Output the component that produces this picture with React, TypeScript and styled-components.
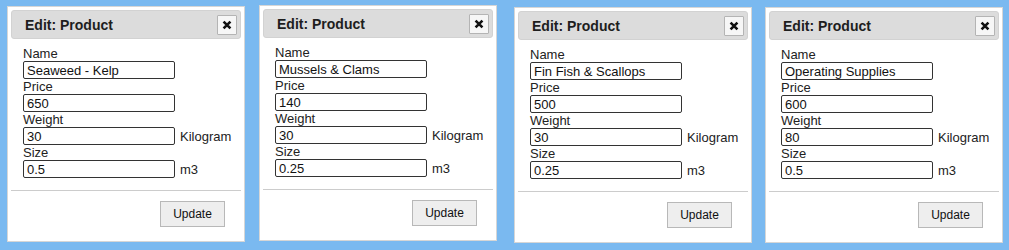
import * as React from "react";
import styled, { createGlobalStyle } from "styled-components";

const GlobalStyle = createGlobalStyle`
  html, body {
    margin: 0;
    padding: 0;
    background: #7ab9f0;
  }
  body {
    font-family: "Liberation Sans", Arial, sans-serif;
  }
`;

const Page = styled.div`
  display: flex;
  align-items: flex-start;
  width: 1009px;
  height: 250px;
  overflow: hidden;
`;

const Dialog = styled.div<{ $left: number; $top: number }>`
  display: flex;
  flex-direction: column;
  flex-shrink: 0;
  box-sizing: border-box;
  width: 238px;
  margin-left: ${(p) => p.$left}px;
  margin-top: ${(p) => p.$top}px;
  padding: 3px;
  background: #ffffff;
  border: 1px solid #d6d6d6;
`;

const Header = styled.div`
  display: flex;
  align-items: center;
  justify-content: space-between;
  box-sizing: border-box;
  height: 29px;
  padding: 0 3px 0 13px;
  background: #dcdcdc;
  border: 1px solid #d2d2d2;
  border-radius: 3px;
`;

const Title = styled.span`
  font-size: 14px;
  font-weight: bold;
  color: #1e1e1e;
`;

const CloseButton = styled.button`
  display: flex;
  align-items: center;
  justify-content: center;
  box-sizing: border-box;
  width: 20px;
  height: 20px;
  padding: 0;
  background: #f6f6f6;
  border: 1px solid #b4b4b4;
  border-radius: 1px;
`;

const Body = styled.div`
  display: flex;
  flex-direction: column;
  padding: 7px 0 0 12px;
`;

const Label = styled.div`
  font-size: 13px;
  line-height: 15px;
  height: 15px;
  color: #222;
`;

const FieldRow = styled.div`
  display: flex;
  align-items: center;
  height: 18px;
`;

const Input = styled.input`
  box-sizing: border-box;
  width: 152px;
  height: 18px;
  margin: 0;
  padding: 0 3px;
  border: 1px solid #333;
  border-radius: 2px;
  font-family: "Liberation Sans", Arial, sans-serif;
  font-size: 13px;
  color: #111;
  background: #fff;
  outline: none;
`;

const Unit = styled.span`
  margin-left: 5px;
  font-size: 13px;
  color: #222;
`;

const Divider = styled.div`
  height: 1px;
  margin-top: 12px;
  background: #cccccc;
`;

const Footer = styled.div`
  display: flex;
  justify-content: flex-end;
  padding: 10px 16px 11px 0;
`;

const UpdateButton = styled.button`
  box-sizing: border-box;
  width: 65px;
  height: 26px;
  padding: 0;
  background: #eeeeee;
  border: 1px solid #b8b8b8;
  font-family: "Liberation Sans", Arial, sans-serif;
  font-size: 12px;
  color: #111;
`;

type Product = {
  name: string;
  price: string;
  weight: string;
  size: string;
  left: number;
  top: number;
};

const products: Product[] = [
  { name: "Seaweed - Kelp", price: "650", weight: "30", size: "0.5", left: 7, top: 6 },
  { name: "Mussels & Clams", price: "140", weight: "30", size: "0.25", left: 14, top: 5 },
  { name: "Fin Fish & Scallops", price: "500", weight: "30", size: "0.25", left: 17, top: 7 },
  { name: "Operating Supplies", price: "600", weight: "80", size: "0.5", left: 13, top: 7 },
];

const CloseIcon = () => (
  <svg width="20" height="20" viewBox="0 0 20 20">
    <path d="M6.2 6.2 L13.8 13.8 M13.8 6.2 L6.2 13.8" stroke="#111" strokeWidth="2.9" />
  </svg>
);

const Field: React.FC<{ label: string; value: string; unit?: string }> = ({ label, value, unit }) => (
  <>
    <Label>{label}</Label>
    <FieldRow>
      <Input defaultValue={value} />
      {unit && <Unit>{unit}</Unit>}
    </FieldRow>
  </>
);

const EditDialog: React.FC<{ product: Product }> = ({ product }) => (
  <Dialog $left={product.left} $top={product.top}>
    <Header>
      <Title>Edit: Product</Title>
      <CloseButton>
        <CloseIcon />
      </CloseButton>
    </Header>
    <Body>
      <Field label="Name" value={product.name} />
      <Field label="Price" value={product.price} />
      <Field label="Weight" value={product.weight} unit="Kilogram" />
      <Field label="Size" value={product.size} unit="m3" />
    </Body>
    <Divider />
    <Footer>
      <UpdateButton>Update</UpdateButton>
    </Footer>
  </Dialog>
);

export default function App() {
  return (
    <>
      <GlobalStyle />
      <Page>
        {products.map((p) => (
          <EditDialog key={p.name} product={p} />
        ))}
      </Page>
    </>
  );
}
